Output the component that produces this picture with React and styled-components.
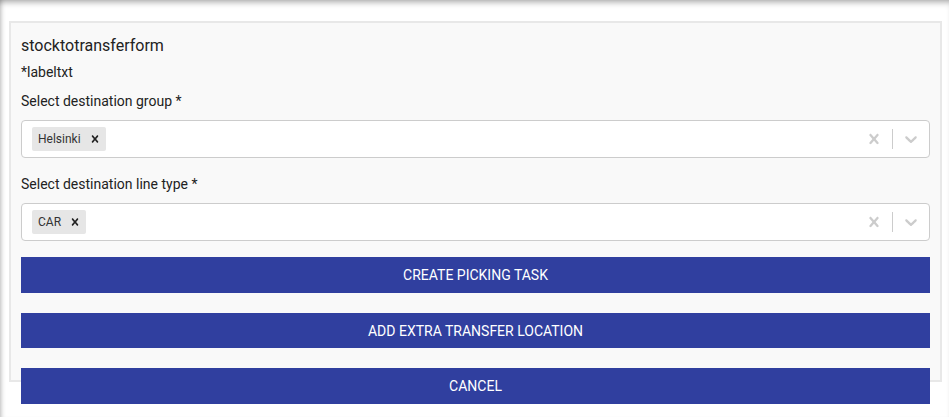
import React from 'react';
import styled, { createGlobalStyle } from 'styled-components';

const GlobalStyle = createGlobalStyle`
  html, body {
    margin: 0;
    padding: 0;
    background: #fff;
    font-family: Roboto, "Liberation Sans", Arial, sans-serif;
    color: #333;
  }
`;

const Page = styled.div`
  min-height: 100vh;
  box-sizing: border-box;
  padding: 21px 7px 0 9px;
  box-shadow: inset 5px 0 5px -4px rgba(0, 0, 0, 0.25), inset 0 6px 6px -4px rgba(0, 0, 0, 0.35);
`;

const Panel = styled.div`
  box-sizing: border-box;
  width: 933px;
  height: 361px;
  background: #f9f9f9;
  border: 2px solid #e8e8e8;
  padding: 11px 10px 0 10px;
  display: flex;
  flex-direction: column;
`;

const Title = styled.div`
  font-size: 16px;
  line-height: 24px;
  color: #222;
  margin-bottom: 4px;
`;

const Label = styled.div`
  font-size: 14px;
  line-height: 20px;
  color: #222;
  margin-bottom: 9px;
`;

const Control = styled.div`
  box-sizing: border-box;
  display: flex;
  align-items: center;
  min-height: 38px;
  background: #fff;
  border: 1px solid #ccc;
  border-radius: 4px;
  margin-bottom: ${(p) => p.$mb || 0}px;
`;

const ValueContainer = styled.div`
  flex: 1;
  display: flex;
  flex-wrap: wrap;
  align-items: center;
  padding: 2px 8px;
`;

const Chip = styled.div`
  display: flex;
  margin: 2px;
  background: #e6e6e6;
  border-radius: 2px;
`;

const ChipLabel = styled.span`
  font-size: 12px;
  line-height: 18px;
  padding: 3px 3px 3px 6px;
  color: #333;
`;

const ChipRemove = styled.span`
  display: flex;
  align-items: center;
  padding: 0 4px;
  border-radius: 2px;
  color: #222;
`;

const Indicators = styled.div`
  display: flex;
  align-items: center;
  align-self: stretch;
`;

const Indicator = styled.div`
  display: flex;
  padding: 8px;
  color: #ccc;
`;

const Separator = styled.span`
  align-self: stretch;
  width: 1px;
  margin: 8px 0;
  background: #ccc;
`;

const Buttons = styled.div`
  display: flex;
  flex-direction: column;
  gap: 20px;
  margin-top: 16px;
`;

const Button = styled.button`
  height: ${(p) => p.$h || 36}px;
  border: none;
  border-radius: 0;
  background: #303f9f;
  color: #fff;
  font-family: Roboto, "Liberation Sans", Arial, sans-serif;
  font-size: 14px;
  text-transform: uppercase;
  cursor: pointer;
  flex-shrink: 0;
`;

const CrossIcon = ({ size = 20 }) => (
  <svg width={size} height={size} viewBox="0 0 20 20" fill="currentColor" aria-hidden="true">
    <path d="M14.348 14.849c-0.469 0.469-1.229 0.469-1.697 0l-2.651-3.030-2.651 3.029c-0.469 0.469-1.229 0.469-1.697 0-0.469-0.469-0.469-1.229 0-1.697l2.758-3.15-2.759-3.152c-0.469-0.469-0.469-1.228 0-1.697s1.228-0.469 1.697 0l2.652 3.031 2.651-3.031c0.469-0.469 1.228-0.469 1.697 0s0.469 1.229 0 1.697l-2.758 3.152 2.758 3.15c0.469 0.469 0.469 1.229 0 1.698z" />
  </svg>
);

const ChevronIcon = () => (
  <svg width="20" height="20" viewBox="0 0 20 20" fill="currentColor" aria-hidden="true">
    <path d="M4.516 7.548c0.436-0.446 1.043-0.481 1.576 0l3.908 3.747 3.908-3.747c0.533-0.481 1.141-0.446 1.574 0 0.436 0.445 0.408 1.197 0 1.615-0.406 0.418-4.695 4.502-4.695 4.502-0.217 0.223-0.502 0.335-0.787 0.335s-0.57-0.112-0.789-0.335c0 0-4.287-4.084-4.695-4.502s-0.436-1.17 0-1.615z" />
  </svg>
);

const MultiSelect = ({ values, mb }) => (
  <Control $mb={mb}>
    <ValueContainer>
      {values.map((v) => (
        <Chip key={v}>
          <ChipLabel>{v}</ChipLabel>
          <ChipRemove>
            <CrossIcon size={14} />
          </ChipRemove>
        </Chip>
      ))}
    </ValueContainer>
    <Indicators>
      <Indicator>
        <CrossIcon />
      </Indicator>
      <Separator />
      <Indicator>
        <ChevronIcon />
      </Indicator>
    </Indicators>
  </Control>
);

const App = () => (
  <Page>
    <GlobalStyle />
    <Panel>
      <Title>stocktotransferform</Title>
      <Label>*labeltxt</Label>
      <Label>Select destination group *</Label>
      <MultiSelect values={['Helsinki']} mb={16} />
      <Label>Select destination line type *</Label>
      <MultiSelect values={['CAR']} />
      <Buttons>
        <Button>Create picking task</Button>
        <Button $h={35}>Add extra transfer location</Button>
        <Button>Cancel</Button>
      </Buttons>
    </Panel>
  </Page>
);

export default App;
